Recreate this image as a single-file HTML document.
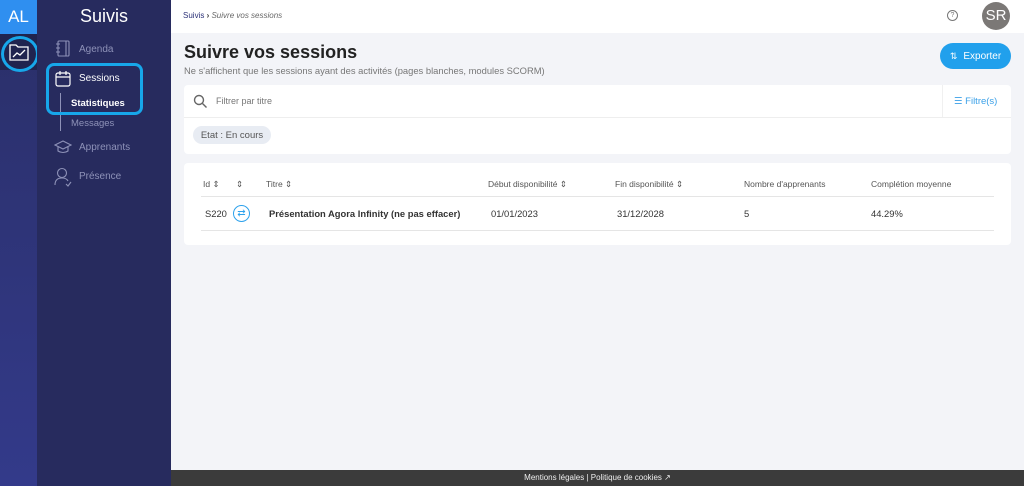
<!DOCTYPE html>
<html><head><meta charset="utf-8"><style>
*{box-sizing:border-box;margin:0;padding:0}
body{width:1024px;height:486px;overflow:hidden;font-family:"Liberation Sans",sans-serif;background:#f3f4f8;position:relative;color:#333}
.rail{position:absolute;left:0;top:0;width:37px;height:486px;background:linear-gradient(#2a2f68,#333a8a)}
.al{position:absolute;left:0;top:0;width:37px;height:34px;background:#2f8ff0;color:#fff;font-size:17px;text-align:center;line-height:34px}
.railsel{position:absolute;left:0;top:34px;width:37px;height:36px;background:#20244f}
.side{position:absolute;left:37px;top:0;width:134px;height:486px;background:#272b5e;color:#fff}
.side .t{text-align:center;font-size:18px;margin-top:6px}
.item{position:absolute;left:55px;font-size:10px;color:#8e92b8}
.main{position:absolute;left:171px;top:0;right:0;height:470px}
.top{height:33px;background:#fff;position:relative}
.card{position:absolute;background:#fff;border-radius:4px}
.foot{position:absolute;left:171px;right:0;top:470px;height:16px;background:#3b3b3b;color:#eee;font-size:8px;text-align:center;line-height:16px}
.hl{position:absolute;border:3px solid #17a7ea;border-radius:8px}
.th{position:absolute;top:179px;font-size:8.5px;color:#555}
.td{position:absolute;top:208px;font-size:9.4px;color:#333}
.fx{display:flex;align-items:center;justify-content:center}
</style></head><body>
<div class="rail"></div>
<div class="al">AL</div>
<div class="railsel"></div>
<svg style="position:absolute;left:9px;top:44px" width="20" height="17" viewBox="0 0 20 17" fill="none" stroke="#fff" stroke-width="1.3"><path d="M1 1h6l2 2h10v13H1z"/><path d="M4 13l4-4 3 2 5-5"/></svg>
<div class="hl" style="left:1px;top:36px;width:38px;height:36px;border-radius:50%"></div>
<div class="side"><div class="t">Suivis</div></div>
<svg style="position:absolute;left:55px;top:40px" width="16" height="17" fill="none" stroke="#8e92b8" stroke-width="1.1"><rect x="3" y="1" width="11" height="15" rx="1"/><path d="M1 4h4M1 8h4M1 12h4M11 1v15"/></svg>
<div class="item" style="left:79px;top:44px">Agenda</div>
<svg style="position:absolute;left:55px;top:70px" width="17" height="17" fill="none" stroke="#fff" stroke-width="1.2"><rect x="1" y="3" width="14" height="13" rx="2"/><path d="M1 7h14M5 1v4M11 1v4"/></svg>
<div class="item" style="left:79px;top:73px;color:#fff">Sessions</div>
<div style="position:absolute;left:60px;top:93px;width:1px;height:38px;background:#8e92b8"></div>
<div class="item" style="left:71px;top:98px;color:#fff;font-weight:bold;font-size:9.5px">Statistiques</div>
<div class="item" style="left:71px;top:118px;font-size:9.5px">Messages</div>
<div class="hl" style="left:46px;top:63px;width:97px;height:52px"></div>
<svg style="position:absolute;left:54px;top:140px" width="18" height="14" fill="none" stroke="#8e92b8" stroke-width="1.1"><path d="M1 5l8-4 8 4-8 4z M4 7v4c3 2 7 2 10 0V7"/></svg>
<div class="item" style="left:79px;top:142px">Apprenants</div>
<svg style="position:absolute;left:54px;top:167px" width="18" height="20" fill="none" stroke="#8e92b8" stroke-width="1.1"><circle cx="8" cy="6" r="4.5"/><path d="M1 18c0-5 3-7 7-7 3 0 5 1 6 3M12 17l2 2 3-4"/></svg>
<div class="item" style="left:79px;top:171px">Présence</div>
<div class="main">
<div class="top"><span style="position:absolute;left:12px;top:11px;font-size:8px;color:#2c3278">Suivis <b style="color:#333">›</b> <i style="color:#666">Suivre vos sessions</i></span>
<div style="position:absolute;left:776px;top:10px;width:11px;height:11px;border:1.2px solid #777;border-radius:50%;font-size:7px;text-align:center;line-height:9px;color:#777">?</div>
<div style="position:absolute;left:811px;top:2px;width:28px;height:28px;border-radius:50%;background:#7b7876;color:#fff;font-size:15px;text-align:center;line-height:28px">SR</div></div>
<div style="position:absolute;left:13px;top:42px;font-size:18px;font-weight:bold;color:#222">Suivre vos sessions</div>
<div style="position:absolute;left:13px;top:65px;font-size:9.4px;color:#777">Ne s'affichent que les sessions ayant des activités (pages blanches, modules SCORM)</div>
<div class="fx" style="position:absolute;left:769px;top:43px;width:71px;height:26px;border-radius:13px;background:#21a0ec;color:#fff;font-size:10px;gap:6px"><span style="font-size:9px">⇅</span><span>Exporter</span></div>
<div class="card" style="left:13px;top:85px;width:827px;height:69px">
<div style="position:absolute;left:0;top:32px;width:100%;height:1px;background:#eee"></div>
<svg style="position:absolute;left:9px;top:9px" width="14" height="14" fill="none" stroke="#666" stroke-width="1.4"><circle cx="6" cy="6" r="4.5"/><path d="M9.5 9.5l4 4"/></svg>
<span style="position:absolute;left:32px;top:11px;font-size:9px;color:#777">Filtrer par titre</span>
<div style="position:absolute;left:758px;top:0;width:1px;height:32px;background:#f0f0f0"></div>
<span style="position:absolute;left:770px;top:11px;font-size:9.5px;color:#3aa0e8">☰ Filtre(s)</span>
<div class="fx" style="position:absolute;left:9px;top:41px;width:78px;height:18px;border-radius:9px;background:#e8ecf3;font-size:9.5px;color:#555">Etat : En cours</div>
</div>
<div class="card" style="left:13px;top:163px;width:827px;height:82px"></div>
</div>
<div style="position:absolute;left:201px;top:196px;width:793px;height:1px;background:#e5e5e5"></div>
<div style="position:absolute;left:201px;top:230px;width:793px;height:1px;background:#e5e5e5"></div>
<div class="th" style="left:203px">Id ⇕</div><div class="th" style="left:236px">⇕</div>
<div class="th" style="left:266px">Titre ⇕</div><div class="th" style="left:488px">Début disponibilité ⇕</div>
<div class="th" style="left:615px">Fin disponibilité ⇕</div><div class="th" style="left:744px">Nombre d'apprenants</div>
<div class="th" style="left:871px">Complétion moyenne</div>
<div class="td" style="left:205px">S220</div>
<div class="fx" style="position:absolute;left:233px;top:205px;width:17px;height:17px;border:1.3px solid #2ea2ec;border-radius:50%;color:#2ea2ec;font-size:10px">⇄</div>
<div class="td" style="left:269px;font-weight:bold">Présentation Agora Infinity (ne pas effacer)</div>
<div class="td" style="left:491px">01/01/2023</div><div class="td" style="left:617px">31/12/2028</div>
<div class="td" style="left:744px">5</div><div class="td" style="left:871px">44.29%</div>
<div class="foot">Mentions légales | Politique de cookies ↗</div>
</body></html>
